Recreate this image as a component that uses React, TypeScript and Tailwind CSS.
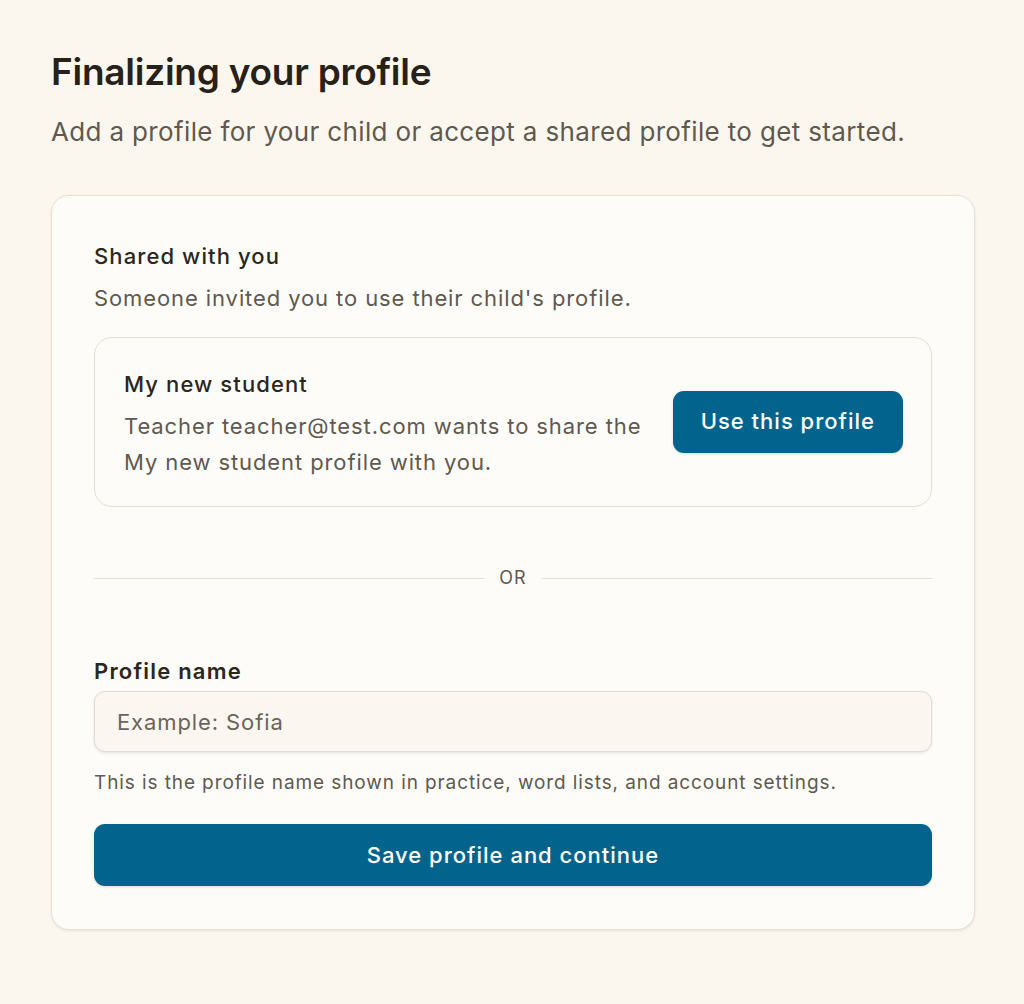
export default function App() {
  return (
    <div
      className="min-h-[1004px] w-full bg-[#fbf7ee] px-[51px] pt-[46px] text-[#2b2620]"
      style={{ fontFamily: "Inter, 'Noto Sans', sans-serif" }}
    >
      <h1 className="text-[37px] font-semibold leading-[52px] tracking-[-0.25px] text-[#27211a]">
        Finalizing your profile
      </h1>
      <p className="mt-[16px] text-[26px] leading-[36px] tracking-[0.35px] text-[#5f594f]">
        Add a profile for your child or accept a shared profile to get started.
      </p>

      <div className="mt-[45px] w-[924px] rounded-[18px] border border-[#e6e1d6] bg-[#fdfcf8] px-[42px] pb-[43px] pt-[45px] shadow-[0_1px_3px_rgba(0,0,0,0.08)]">
        <h2 className="text-[22px] font-medium leading-[30px] tracking-[1.1px] text-[#2b2620]">
          Shared with you
        </h2>
        <p className="mt-[12px] text-[22px] leading-[30px] tracking-[0.9px] text-[#5f594f]">
          Someone invited you to use their child's profile.
        </p>

        <div className="mt-[24px] flex items-center justify-between rounded-[18px] border border-[#e3ded3] bg-[#fdfcf8] pb-[26px] pl-[29px] pr-[28px] pt-[31px]">
          <div>
            <div className="text-[22px] font-medium leading-[30px] tracking-[1.1px] text-[#2b2620]">
              My new student
            </div>
            <p className="mt-[9px] w-[530px] text-[22px] leading-[36px] tracking-[0.9px] text-[#5f594f]">
              Teacher teacher@test.com wants to share the My new student profile with you.
            </p>
          </div>
          <button
            type="button"
            className="mb-[6px] h-[62px] rounded-[11px] bg-[#02648c] px-[28px] text-[22px] font-medium tracking-[1px] text-white shadow-[0_1px_3px_rgba(0,0,0,0.15)]"
          >
            Use this profile
          </button>
        </div>

        <div className="mt-[59px] flex items-center gap-[15px]">
          <div className="h-px flex-1 bg-[#e2ddd2]" />
          <span className="text-[18px] leading-[24px] tracking-[1px] text-[#5f594f]">OR</span>
          <div className="h-px flex-1 bg-[#e2ddd2]" />
        </div>

        <label className="mt-[66px] block text-[22px] font-semibold leading-[30px] tracking-[1.2px] text-[#2b2620]">
          Profile name
        </label>
        <input
          type="text"
          placeholder="Example: Sofia"
          className="mt-[5px] block h-[61px] w-full rounded-[11px] border border-[#e3ded3] bg-[#fbf7f0] px-[22px] text-[22px] tracking-[0.9px] text-[#2b2620] shadow-[0_1px_3px_rgba(0,0,0,0.1)] outline-none placeholder:text-[#6a645a]"
        />
        <p className="mt-[18px] text-[19px] leading-[26px] tracking-[0.9px] text-[#5f594f]">
          This is the profile name shown in practice, word lists, and account settings.
        </p>

        <button
          type="button"
          className="mt-[28px] h-[62px] w-full rounded-[11px] bg-[#02648c] text-[22px] font-medium tracking-[1px] text-white shadow-[0_1px_3px_rgba(0,0,0,0.15)]"
        >
          Save profile and continue
        </button>
      </div>
    </div>
  );
}
